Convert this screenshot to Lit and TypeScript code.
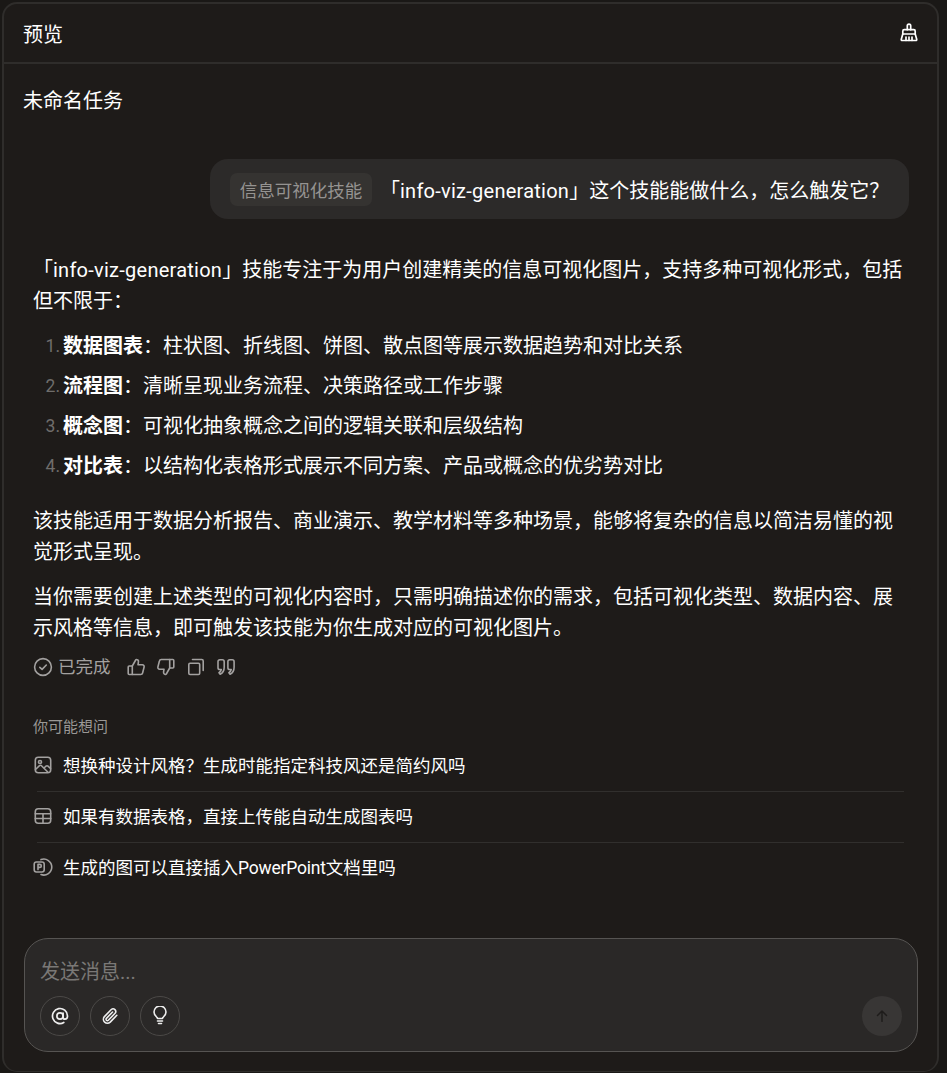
import { LitElement, html, css, svg } from "lit";
import { customElement } from "lit/decorators.js";

const ic = (body: unknown, size = 20, sw = 1.6) => html`<svg class="ic" width=${size} height=${size} viewBox="0 0 20 20" fill="none" stroke="currentColor" stroke-width=${sw} stroke-linecap="round" stroke-linejoin="round">${body}</svg>`;

const broom = svg`<path d="M8.300 6.700V2.800a1.700 1.700 0 0 1 3.400 0v3.900"/><path d="M3.800 11V8.200c0-.8.6-1.500 1.400-1.500h9.600c.8 0 1.400.7 1.400 1.500V11"/><path d="M3.800 11h12.400l1.500 5.200c.2.8-.2 1.300-1 1.300H3.300c-.8 0-1.200-.5-1-1.300z"/><path d="M7 14v3.300M10 14v3.300M13 14v3.300"/>`;
const check = svg`<circle cx="10" cy="10" r="8.400"/><path d="M6.800 10.300l2.300 2.100 4.200-4.400"/>`;
const up = svg`<path d="M6.300 9l3.400-6c.2-.4.6-.6 1-.5 1.200.2 1.900 1.300 1.700 2.500L12 7.800h4.400c1.200 0 2 1.100 1.700 2.200l-1.500 6c-.2.9-1 1.500-1.900 1.500H6.300z"/><path d="M6.300 9H3.200c-.6 0-1 .4-1 1v6.500c0 .6.4 1 1 1h3.100"/>`;
const down = svg`<path d="M13.700 11l-3.400 6c-.2.4-.6.6-1 .5-1.200-.2-1.900-1.300-1.700-2.500L8 12.200H3.600c-1.200 0-2-1.100-1.700-2.200l1.500-6c.2-.9 1-1.500 1.900-1.500h8.400z"/><path d="M13.700 11h3.100c.6 0 1-.4 1-1V3.500c0-.6-.4-1-1-1h-3.100"/>`;
const copy = svg`<rect x="2.800" y="6.300" width="10.900" height="11.200" rx="1.200"/><path d="M6.500 2.500h9.300c.9 0 1.400.5 1.400 1.400v9.600"/>`;
const quote = svg`<path d="M3.800 2.800h2.500c1.100 0 1.900.8 1.900 1.900v5.500c0 3.300-1.500 5.800-4 7l-1.200-1.500c1.300-.8 2-1.800 2.300-3.200H3.800c-1.100 0-1.800-.8-1.800-1.800V4.600c0-1 .7-1.800 1.800-1.800z"/><path d="M13.700 2.800h2.500c1.100 0 1.900.8 1.900 1.900v5.500c0 3.300-1.500 5.800-4 7l-1.200-1.500c1.300-.8 2-1.800 2.300-3.200h-1.500c-1.100 0-1.800-.8-1.800-1.800V4.600c0-1 .7-1.800 1.800-1.800z"/>`;
const image = svg`<rect x="2.300" y="2.300" width="15.400" height="15.400" rx="3"/><circle cx="7" cy="7" r="1.500"/><path d="M2.500 14.500l4-3.800c.6-.5 1.400-.5 2 0l6 6"/><path d="M11.500 12.500l1.500-1.300c.6-.5 1.400-.5 2 0l2.500 2.300"/>`;
const table = svg`<rect x="2.300" y="2.800" width="15.400" height="14.400" rx="3"/><path d="M2.300 7.800h15.400M2.300 12.500h15.400M10 7.800v9.400"/>`;
const ppt = svg`<path d="M8 2.600a8 8 0 1 1 0 15"/><rect x="1.200" y="5" width="10" height="10" rx="2.200"/><path d="M5 12.600V7.400h1.800a1.500 1.500 0 0 1 0 3H5"/>`;
const at = svg`<circle cx="10" cy="10" r="3.100"/><path d="M13.100 7v4.200c0 1.300.9 2 1.900 2 1.300 0 2.500-1.200 2.500-3.300A7.500 7.500 0 1 0 13.800 16.500"/>`;
const clip = svg`<path d="M16.800 9.300l-6.600 6.800a4 4 0 0 1-5.800-5.500l6.900-7.100a2.700 2.700 0 0 1 3.800 3.800l-6.800 7a1.300 1.300 0 0 1-1.900-1.900l6.200-6.400"/>`;
const bulb = svg`<path d="M7.500 12.500c0-1.800-3.500-2.800-3.500-6.500a6 6 0 0 1 12 0c0 3.700-3.500 4.700-3.500 6.500z"/><path d="M7.500 15h5M8.500 17.500h3"/>`;
const arrow = svg`<path d="M10 16V4.500M5 9.500l5-5 5 5"/>`;

const C = "\uFF0C";
const Q = "\uFF1F";
const M = "\uFF1A";
const lat = html`<span class="lat">info-viz-generation</span>`;
const userTail = "」这个技能能做什么" + C + "怎么触发它" + Q;
const para1Line1 = "」技能专注于为用户创建精美的信息可视化图片" + C + "支持多种可视化形式" + C + "包括";
const para1Line2 = "但不限于" + M;
const para2 = "该技能适用于数据分析报告、商业演示、教学材料等多种场景" + C + "能够将复杂的信息以简洁易懂的视觉形式呈现。";
const para3 = "当你需要创建上述类型的可视化内容时" + C + "只需明确描述你的需求" + C + "包括可视化类型、数据内容、展示风格等信息" + C + "即可触发该技能为你生成对应的可视化图片。";
const sug1 = "想换种设计风格" + Q + "生成时能指定科技风还是简约风吗";
const sug2 = "如果有数据表格" + C + "直接上传能自动生成图表吗";

@customElement("app-root")
export class AppRoot extends LitElement {
  static styles = css`
    :host { display: block; height: 1073px; background: #1a1816; padding: 2px 8px 1px 2px; box-sizing: border-box;
      font-family: Roboto, "Noto Sans CJK SC", sans-serif; color: #fff; font-size: 20px; }
    * { box-sizing: border-box; }
    .ic { display: block; flex: none; }
    .lat { letter-spacing: 0.25px; }
    .ppt { letter-spacing: -0.2px; }
    .panel { height: 100%; border: 2px solid #2f2d2b; border-bottom-width: 1px; border-radius: 15px; background: #1e1b19; display: flex; flex-direction: column; overflow: hidden; }
    .head { height: 60px; flex: none; display: flex; align-items: center; justify-content: space-between; padding: 0 18px 0 19px; border-bottom: 2px solid #2f2d2b; font-size: 20px; }
    .body { flex: 1; min-height: 0; display: flex; flex-direction: column; padding: 0; }
    .title { padding: 21px 19px 0; line-height: 32px; height: 52px; }
    .user-row { display: flex; justify-content: flex-end; padding: 43px 28px 0 0; }
    .bubble { height: 60px; width: 699px; display: flex; align-items: center; background: #2c2a29; border-radius: 18px; padding: 0 20px; white-space: nowrap; }
    .tag { height: 33px; display: flex; align-items: center; padding: 0 9.75px; background: #353331; border-radius: 7px; color: #959391; font-size: 17.5px; margin-right: 8px; white-space: nowrap; }
    .answer { padding: 36px 29px 0 29px; line-height: 31px; }
    .answer p { margin: 0; }
    .answer p + ol { margin-top: 9px; }
    ol { list-style: none; margin: 0 0 20px; padding: 0; }
    li { display: flex; height: 40px; align-items: center; white-space: nowrap; }
    .num { width: 30px; text-align: right; padding-right: 3px; color: #6f6d6b; font-size: 17.5px; flex: none; }
    b { font-weight: 700; }
    .p2 { margin-top: 14px !important; }
    .status { display: flex; align-items: center; height: 20px; margin: 13px 0 0 29px; color: #a3a1a0; }
    .status span { font-size: 17.5px; margin: 0 15px 0 5px; line-height: 20px; }
    .acts { display: flex; gap: 10px; }
    .label { margin: 40px 0 0 29px; color: #9a9896; font-size: 15px; line-height: 20px; }
    .sugs { margin: 0 33px 0 29px; padding-top: 2px; }
    .sug { height: 51px; display: flex; align-items: center; gap: 10px; font-size: 17.5px; position: relative; color: #fff; white-space: nowrap; }
    .sug .ic { color: #a3a1a0; }
    .sug + .sug::before { content: ""; position: absolute; left: 4px; right: 0; top: 1px; border-top: 1px solid #312f2d; }
    .spacer { flex: 1; }
    .input { margin: 0 19px 19px 20px; height: 114px; flex: none; border: 1px solid #565452; border-radius: 24px; background: #2a2827; padding: 17px 15px 15px; display: flex; flex-direction: column; justify-content: space-between; }
    .ph { color: #7a7876; line-height: 32px; height: 32px; }
    .tools { display: flex; gap: 10px; align-items: center; }
    .cb { width: 40px; height: 40px; border-radius: 50%; border: 1px solid #4b4947; color: #eee; display: flex; align-items: center; justify-content: center; }
    .send { margin-left: auto; border: none; background: #383635; color: #1e1c1b; }
  `;

  render() {
    const items = [
      ["数据图表", "柱状图、折线图、饼图、散点图等展示数据趋势和对比关系"],
      ["流程图", "清晰呈现业务流程、决策路径或工作步骤"],
      ["概念图", "可视化抽象概念之间的逻辑关联和层级结构"],
      ["对比表", "以结构化表格形式展示不同方案、产品或概念的优劣势对比"],
    ];
    return html`
      <div class="panel">
        <div class="head"><span>预览</span>${ic(broom, 20, 1.7)}</div>
        <div class="body">
          <div class="title">未命名任务</div>
          <div class="user-row">
            <div class="bubble"><span class="tag">信息可视化技能</span><span>「${lat}${userTail}</span></div>
          </div>
          <div class="answer">
            <p>「${lat}${para1Line1}<br />${para1Line2}</p>
            <ol>
              ${items.map((it, i) => html`<li><span class="num">${i + 1}.</span><b>${it[0]}</b><span>${M}</span><span>${it[1]}</span></li>`)}
            </ol>
            <p>${para2}</p>
            <p class="p2">${para3}</p>
          </div>
          <div class="status">${ic(check)}<span>已完成</span>
            <div class="acts">${ic(up)}${ic(down)}${ic(copy)}${ic(quote)}</div>
          </div>
          <div class="label">你可能想问</div>
          <div class="sugs">
            <div class="sug">${ic(image)}<span>${sug1}</span></div>
            <div class="sug">${ic(table)}<span>${sug2}</span></div>
            <div class="sug">${ic(ppt)}<span>生成的图可以直接插入<span class="ppt">PowerPoint</span>文档里吗</span></div>
          </div>
          <div class="spacer"></div>
          <div class="input">
            <div class="ph">发送消息...</div>
            <div class="tools">
              <div class="cb">${ic(at, 20, 1.7)}</div>
              <div class="cb">${ic(clip, 20, 1.6)}</div>
              <div class="cb">${ic(bulb, 20, 1.6)}</div>
              <div class="cb send">${ic(arrow, 18, 1.6)}</div>
            </div>
          </div>
        </div>
      </div>
    `;
  }
}
